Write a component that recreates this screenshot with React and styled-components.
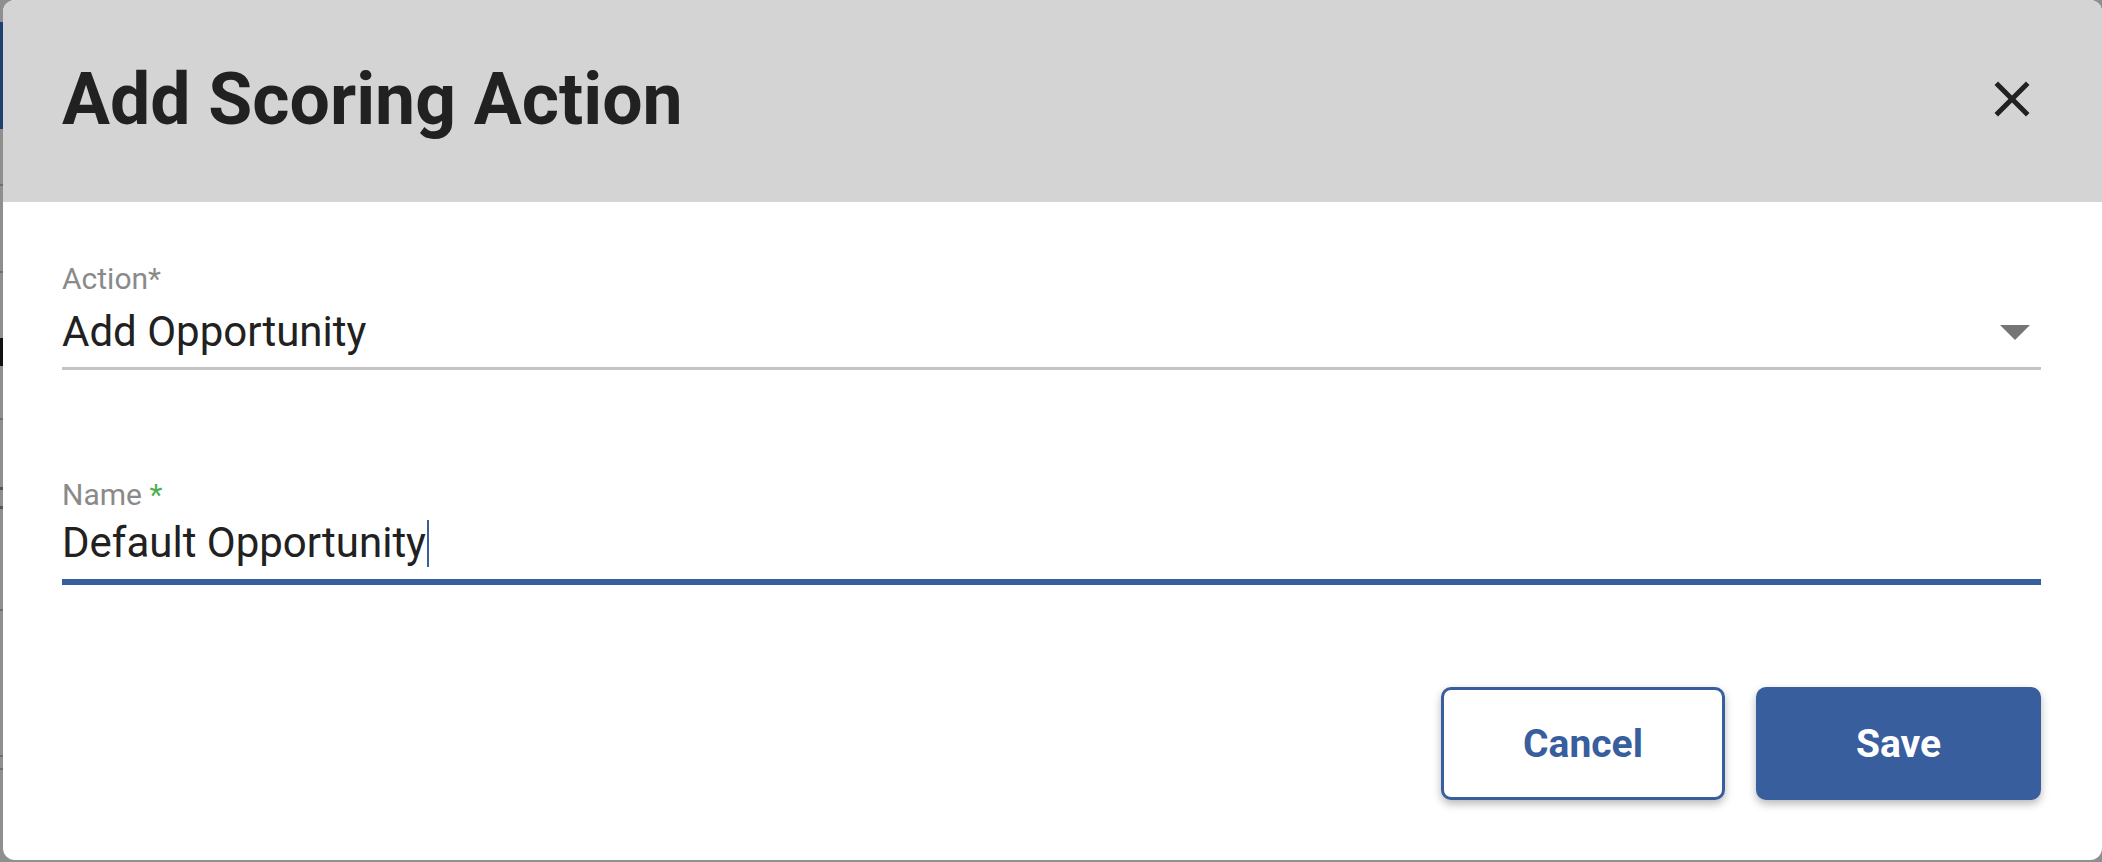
import React from "react";
import styled, { createGlobalStyle } from "styled-components";

const blue = "#385e9d";

const GlobalStyle = createGlobalStyle`
  html, body {
    margin: 0;
    padding: 0;
    width: 2102px;
    height: 862px;
    overflow: hidden;
    background: #8f8f8f;
    font-family: Roboto, "Liberation Sans", sans-serif;
  }
  * {
    box-sizing: border-box;
  }
`;

const Screen = styled.div`
  display: flex;
  width: 2102px;
  height: 862px;
  padding-bottom: 2px;
`;

// thin slice of the page that stays visible behind the dialog
const PageEdge = styled.div`
  width: 3px;
  display: flex;
  flex-direction: column;
`;

const Sliver = styled.span`
  display: block;
  height: ${(p) => p.$h}px;
  background: ${(p) => p.$c || "transparent"};
`;

const Dialog = styled.div`
  flex: 1;
  display: flex;
  flex-direction: column;
  background: #ffffff;
  border-radius: 12px;
  overflow: hidden;
`;

const Header = styled.div`
  height: 202px;
  flex-shrink: 0;
  display: flex;
  align-items: center;
  justify-content: space-between;
  padding: 0 60px 4px 59px;
  background: #d4d4d4;
`;

const Title = styled.h1`
  margin: 0;
  font-size: 71.5px;
  font-weight: 700;
  color: #212121;
  line-height: normal;
`;

const CloseButton = styled.button`
  width: 60px;
  height: 60px;
  padding: 0;
  border: 0;
  background: none;
  display: flex;
  cursor: pointer;

  svg {
    width: 60px;
    height: 60px;
    fill: #212121;
  }
`;

const Body = styled.div`
  display: flex;
  flex-direction: column;
  padding: 59px 61px 0 59px;
`;

const Field = styled.div`
  display: flex;
  flex-direction: column;
  margin-top: ${(p) => p.$offset || 0}px;
  padding-bottom: ${(p) => (p.$focused ? 11 : 10)}px;
  border-bottom: ${(p) => (p.$focused ? `6px solid ${blue}` : "3px solid #c4c4c4")};
`;

const Label = styled.label`
  font-size: 30px;
  line-height: 36px;
  color: #8a8a8a;
`;

const Required = styled.span`
  color: #4caf50;
`;

const ValueRow = styled.div`
  display: flex;
  align-items: center;
  margin-top: ${(p) => p.$gap}px;
  height: 50px;
  font-size: 42px;
  color: #212121;
`;

const ValueText = styled.span`
  line-height: 50px;
`;

const Caret = styled.span`
  width: 2px;
  height: 47px;
  margin-left: 1px;
  background: ${blue};
`;

const Arrow = styled.svg`
  width: 30px;
  height: 15px;
  margin-left: auto;
  margin-right: 11px;
  fill: #757575;
`;

const Actions = styled.div`
  display: flex;
  justify-content: flex-end;
  gap: 31px;
  margin-top: 102px;
`;

const Button = styled.button`
  width: ${(p) => (p.$primary ? 285 : 284)}px;
  height: 113px;
  border-radius: 10px;
  border: 3px solid ${blue};
  background: ${(p) => (p.$primary ? blue : "#ffffff")};
  color: ${(p) => (p.$primary ? "#ffffff" : blue)};
  font-family: Roboto, "Liberation Sans", sans-serif;
  font-size: 39px;
  font-weight: 700;
  box-shadow: 0 4px 8px rgba(0, 0, 0, 0.28);
  cursor: pointer;
`;

const edge = [
  { h: 22 },
  { h: 107, c: "#1f3f70" },
  { h: 55 },
  { h: 2, c: "#6e6e6e" },
  { h: 85 },
  { h: 2, c: "#6e6e6e" },
  { h: 65 },
  { h: 28, c: "#111111" },
  { h: 52 },
  { h: 2, c: "#6e6e6e" },
  { h: 67 },
  { h: 3, c: "#555555" },
  { h: 16 },
  { h: 3, c: "#555555" },
  { h: 100 },
  { h: 2, c: "#6e6e6e" },
  { h: 144 },
  { h: 2, c: "#6e6e6e" },
  { h: 11 },
  { h: 2, c: "#6e6e6e" },
];

export default function App() {
  return (
    <>
      <GlobalStyle />
      <Screen>
        <PageEdge>
          {edge.map((s, i) => (
            <Sliver key={i} $h={s.h} $c={s.c} />
          ))}
        </PageEdge>
        <Dialog>
          <Header>
            <Title>Add Scoring Action</Title>
            <CloseButton aria-label="close">
              <svg viewBox="0 0 24 24">
                <path d="M19 6.41L17.59 5 12 10.59 6.41 5 5 6.41 10.59 12 5 17.59 6.41 19 12 13.41 17.59 19 19 17.59 13.41 12z" />
              </svg>
            </CloseButton>
          </Header>
          <Body>
            <Field>
              <Label>Action*</Label>
              <ValueRow $gap={10}>
                <ValueText>Add Opportunity</ValueText>
                <Arrow viewBox="0 0 30 15">
                  <polygon points="0,0 30,0 15,15" />
                </Arrow>
              </ValueRow>
            </Field>
            <Field $focused $offset={107}>
              <Label>
                Name <Required>*</Required>
              </Label>
              <ValueRow $gap={5}>
                <ValueText>Default Opportunity</ValueText>
                <Caret />
              </ValueRow>
            </Field>
            <Actions>
              <Button>Cancel</Button>
              <Button $primary>Save</Button>
            </Actions>
          </Body>
        </Dialog>
      </Screen>
    </>
  );
}
